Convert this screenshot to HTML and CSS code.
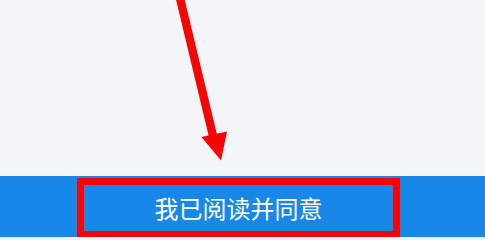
FILE: index.html
```html
<!DOCTYPE html>
<html lang="zh">
<head>
<meta charset="utf-8">
<link rel="stylesheet" href="styles.css">
</head>
<body>
<main class="page">
  <section class="canvas">
    <svg class="arrow" width="485" height="176" viewBox="0 0 485 176" xmlns="http://www.w3.org/2000/svg">
      <line x1="179" y1="-6" x2="213.5" y2="138" stroke="#f50505" stroke-width="8.4"/>
      <polygon points="201.5,137 227,131.5 221,160.5" fill="#f50505"/>
    </svg>
  </section>
  <footer class="bar">
    <div class="btn-outline">
      <span class="btn-label">我已阅读并同意</span>
    </div>
  </footer>
</main>
</body>
</html>
```
FILE: styles.css
```css
html, body {
  margin: 0;
  padding: 0;
  width: 485px;
  height: 237px;
  overflow: hidden;
  background: #f4f5f9;
}
.page {
  display: flex;
  flex-direction: column;
  width: 485px;
  height: 237px;
}
.canvas {
  height: 176px;
  flex: none;
}
.arrow {
  display: block;
}
.bar {
  flex: 1;
  background: #1888e8;
  padding-top: 2px;
  box-sizing: border-box;
  display: flex;
  align-items: stretch;
}
.btn-outline {
  margin-left: 77px;
  width: 323px;
  box-sizing: border-box;
  border: 7px solid #f50505;
  border-bottom-width: 6px;
  display: flex;
  align-items: center;
  justify-content: center;
}
.btn-label {
  font-family: "Noto Sans CJK SC", "Noto Sans", sans-serif;
  font-size: 24px;
  line-height: 1;
  color: #ffffff;
}
```
